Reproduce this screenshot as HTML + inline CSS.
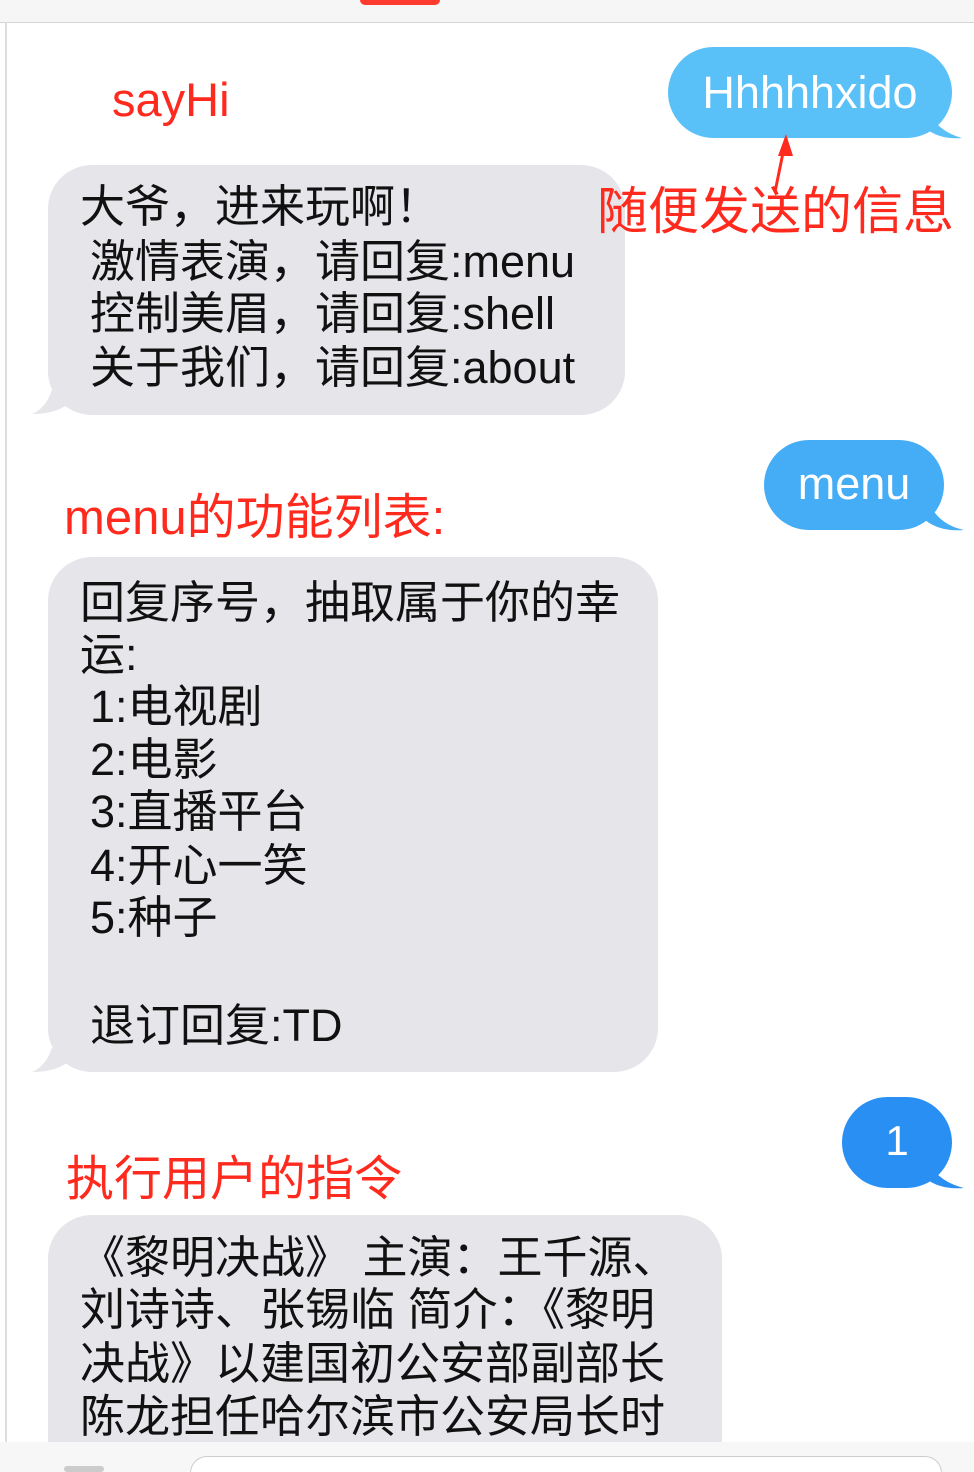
<!DOCTYPE html>
<html><head><meta charset="utf-8"><style>
html,body{margin:0;width:974px;height:1472px;overflow:hidden}
body{background:#fff;position:relative;font-family:"Liberation Sans","Noto Sans CJK SC",sans-serif}
.a{position:absolute;white-space:pre}
.g{position:absolute;background:#e5e5ea;border-radius:44px}
.t{position:absolute;white-space:pre;font-size:45px;line-height:52px;color:#111}
.r{position:absolute;white-space:pre;color:#ff2a1e}
.b{position:absolute;border-radius:46px;color:#fff;text-align:center}
</style></head><body>
<div class="a" style="left:0;top:0;width:974px;height:22px;background:#f6f6f6;border-bottom:1px solid #d5d5d5"></div>
<div class="a" style="left:360px;top:0;width:80px;height:5px;background:#ff3b30;border-radius:0 0 40px 40px"></div>
<div class="a" style="left:5px;top:22px;width:2px;height:1450px;background:#ddd"></div>

<svg class="a" style="left:0;top:0" width="974" height="1472">
<path d="M930 115 Q940 132 962 138 Q940 140 925 128Z" fill="#5ac0f8"/>
<path d="M930 505 Q940 525 964 530 Q940 532 925 520Z" fill="#45acf6"/>
<path d="M930 1165 Q940 1182 964 1188 Q940 1190 925 1178Z" fill="#2a8ff2"/>
<path d="M52 390 Q46 408 32 414 Q60 414 72 400Z" fill="#e5e5ea"/>
<path d="M52 1048 Q46 1066 32 1072 Q60 1072 72 1058Z" fill="#e5e5ea"/>
</svg>
<div class="b" style="left:668px;top:47px;width:284px;height:91px;background:#5ac0f8;font-size:45px;line-height:91px">Hhhhhxido</div>
<div class="b" style="left:764px;top:440px;width:180px;height:90px;background:#45acf6;font-size:45px;line-height:88px">menu</div>
<div class="b" style="left:842px;top:1097px;width:110px;height:91px;background:#2a8ff2;font-size:42px;line-height:88px;border-radius:48px">1</div>

<div class="g" style="left:48px;top:165px;width:577px;height:250px"></div>
<div class="t" style="left:80px;top:181px">大爷，进来玩啊！</div>
<div class="t" style="left:90px;top:236px">激情表演，请回复:menu</div>
<div class="t" style="left:90px;top:288px">控制美眉，请回复:shell</div>
<div class="t" style="left:90px;top:342px">关于我们，请回复:about</div>

<div class="g" style="left:48px;top:557px;width:610px;height:515px"></div>
<div class="t" style="left:80px;top:577px">回复序号，抽取属于你的幸</div>
<div class="t" style="left:80px;top:629px">运:</div>
<div class="t" style="left:90px;top:681px">1:电视剧</div>
<div class="t" style="left:90px;top:734px">2:电影</div>
<div class="t" style="left:90px;top:786px">3:直播平台</div>
<div class="t" style="left:90px;top:840px">4:开心一笑</div>
<div class="t" style="left:90px;top:892px">5:种子</div>
<div class="t" style="left:90px;top:1000px">退订回复:TD</div>

<div class="g" style="left:48px;top:1215px;width:674px;height:230px;border-radius:44px 44px 0 0"></div>
<div class="t" style="left:80px;top:1232px">《黎明决战》 主演：王千源、</div>
<div class="t" style="left:80px;top:1284px">刘诗诗、张锡临 简介：《黎明</div>
<div class="t" style="left:80px;top:1338px">决战》以建国初公安部副部长</div>
<div class="t" style="left:80px;top:1391px">陈龙担任哈尔滨市公安局长时</div>

<div class="r" style="left:112px;top:72px;font-size:47px;line-height:56px">sayHi</div>
<div class="r" style="left:597px;top:183px;font-size:51px;line-height:58px">随便发送的信息</div>
<div class="r" style="left:64px;top:490px;font-size:49px;line-height:56px">menu的功能列表:</div>
<div class="r" style="left:66px;top:1151px;font-size:48px;line-height:58px">执行用户的指令</div>
<svg class="a" style="left:0;top:0" width="974" height="300">
<path d="M786 138 L775 192" stroke="#ff2a1e" stroke-width="3" fill="none"/>
<path d="M786 134 L778 156 L793 156Z" fill="#ff2a1e"/>
</svg>

<div class="a" style="left:0;top:1442px;width:974px;height:30px;background:#f7f7f7"></div>
<div class="a" style="left:190px;top:1456px;width:750px;height:16px;border:1px solid #ccc;border-bottom:none;border-radius:22px 22px 0 0;background:#fff"></div>
<div class="a" style="left:64px;top:1466px;width:40px;height:6px;background:#ccc;border-radius:3px"></div>
</body></html>
